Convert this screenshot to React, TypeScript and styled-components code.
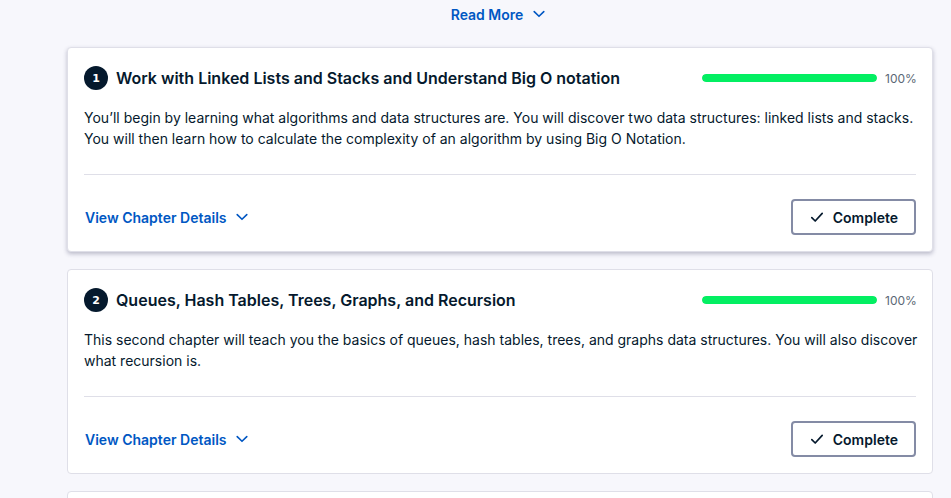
import React from "react";
import styled, { createGlobalStyle, css } from "styled-components";

const GlobalStyle = createGlobalStyle`
  *, *::before, *::after { box-sizing: border-box; }
  body {
    margin: 0;
    background: #f7f7fc;
    color: #05192d;
    font-family: Inter, "Liberation Sans", sans-serif;
    font-size: 14px;
    line-height: 21px;
    overflow: hidden;
  }
`;

const Page = styled.main`
  padding: 0 18px 0 67px;
  height: 100vh;
  overflow: hidden;
`;

const MoreRow = styled.div`
  display: flex;
  justify-content: center;
  padding: 0 3px 19px 0;
`;

const LinkButton = styled.button`
  display: inline-flex;
  align-items: center;
  gap: 8px;
  height: 28px;
  padding: 0 0 0 1px;
  border: 0;
  background: none;
  color: #0057c3;
  font: inherit;
  font-weight: 600;
  cursor: pointer;
`;

const ChapterList = styled.ol`
  display: flex;
  flex-direction: column;
  gap: 17px;
  margin: 0;
  padding: 0;
  list-style: none;
`;

const Card = styled.li<{ $raised?: boolean }>`
  padding: 16px;
  border: 1px solid #dfdfe8;
  border-radius: 4px;
  background: #fff;
  ${(p) =>
    p.$raised &&
    css`
      box-shadow: 0 2px 4px rgba(48, 48, 87, 0.3);
    `}
`;

const CardHeader = styled.header`
  display: flex;
  align-items: center;
  gap: 8px;
  height: 28px;
  margin-bottom: 15px;
`;

const Badge = styled.span`
  display: flex;
  align-items: center;
  justify-content: center;
  flex: none;
  width: 24px;
  height: 24px;
  border-radius: 50%;
  background: #05192d;
  color: #fff;
  font-family: "DejaVu Sans", sans-serif;
  font-size: 11px;
  font-weight: 700;
`;

const Title = styled.h4`
  flex: 1;
  margin: 0;
  font-size: 16px;
  line-height: 20px;
  font-weight: 600;
  white-space: nowrap;
`;

const Track = styled.div`
  flex: none;
  width: 175px;
  height: 8px;
  border-radius: 4px;
  background: #efefef;
  overflow: hidden;
`;

const Fill = styled.div`
  height: 100%;
  border-radius: 4px;
  background: #03ef62;
`;

const Percent = styled.span`
  width: 31px;
  color: #5b6875;
  font-size: 12px;
  text-align: right;
`;

const Description = styled.p`
  margin: 0 -8px 25px 0;
`;

const CardFooter = styled.footer`
  display: flex;
  align-items: center;
  justify-content: space-between;
  padding-top: 24px;
  border-top: 1px solid #dfdfe8;
`;

const CompleteButton = styled.button`
  display: inline-flex;
  align-items: center;
  justify-content: center;
  gap: 8px;
  min-width: 125px;
  height: 36px;
  padding: 0 16px;
  border: 2px solid #848ba5;
  border-radius: 4px;
  background: #fff;
  color: #05192d;
  font: inherit;
  font-weight: 600;
  cursor: pointer;
`;

const Chevron = () => (
  <svg width="16" height="16" viewBox="0 0 16 16" fill="none" aria-hidden="true">
    <path d="M3.2 5.6l4.8 4.7 4.8-4.7" stroke="currentColor" strokeWidth="1.6" strokeLinecap="round" strokeLinejoin="round" />
  </svg>
);

const Check = () => (
  <svg width="16" height="16" viewBox="0 0 16 16" fill="none" aria-hidden="true">
    <path d="M2.8 8.6l3.4 3.4 7-7.6" stroke="currentColor" strokeWidth="1.7" strokeLinecap="round" strokeLinejoin="round" />
  </svg>
);

type Chapter = { title: string; progress: number; description: string };

const chapters: Chapter[] = [
  {
    title: "Work with Linked Lists and Stacks and Understand Big O notation",
    progress: 100,
    description:
      "You’ll begin by learning what algorithms and data structures are. You will discover two data structures: linked lists and stacks. You will then learn how to calculate the complexity of an algorithm by using Big O Notation.",
  },
  {
    title: "Queues, Hash Tables, Trees, Graphs, and Recursion",
    progress: 100,
    description:
      "This second chapter will teach you the basics of queues, hash tables, trees, and graphs data structures. You will also discover what recursion is.",
  },
];

export default function App() {
  return (
    <>
      <GlobalStyle />
      <Page>
        <MoreRow>
          <LinkButton type="button">
            Read More
            <Chevron />
          </LinkButton>
        </MoreRow>
        <ChapterList>
          {chapters.map((c, i) => (
            <Card key={c.title} $raised={i === 0}>
              <CardHeader>
                <Badge>{i + 1}</Badge>
                <Title>{c.title}</Title>
                <Track role="progressbar" aria-label={c.title} aria-valuenow={c.progress}>
                  <Fill style={{ width: `${c.progress}%` }} />
                </Track>
                <Percent>{c.progress}%</Percent>
              </CardHeader>
              <Description>{c.description}</Description>
              <CardFooter>
                <LinkButton type="button">
                  View Chapter Details
                  <Chevron />
                </LinkButton>
                <CompleteButton type="button">
                  <Check />
                  Complete
                </CompleteButton>
              </CardFooter>
            </Card>
          ))}
          <Card />
        </ChapterList>
      </Page>
    </>
  );
}
